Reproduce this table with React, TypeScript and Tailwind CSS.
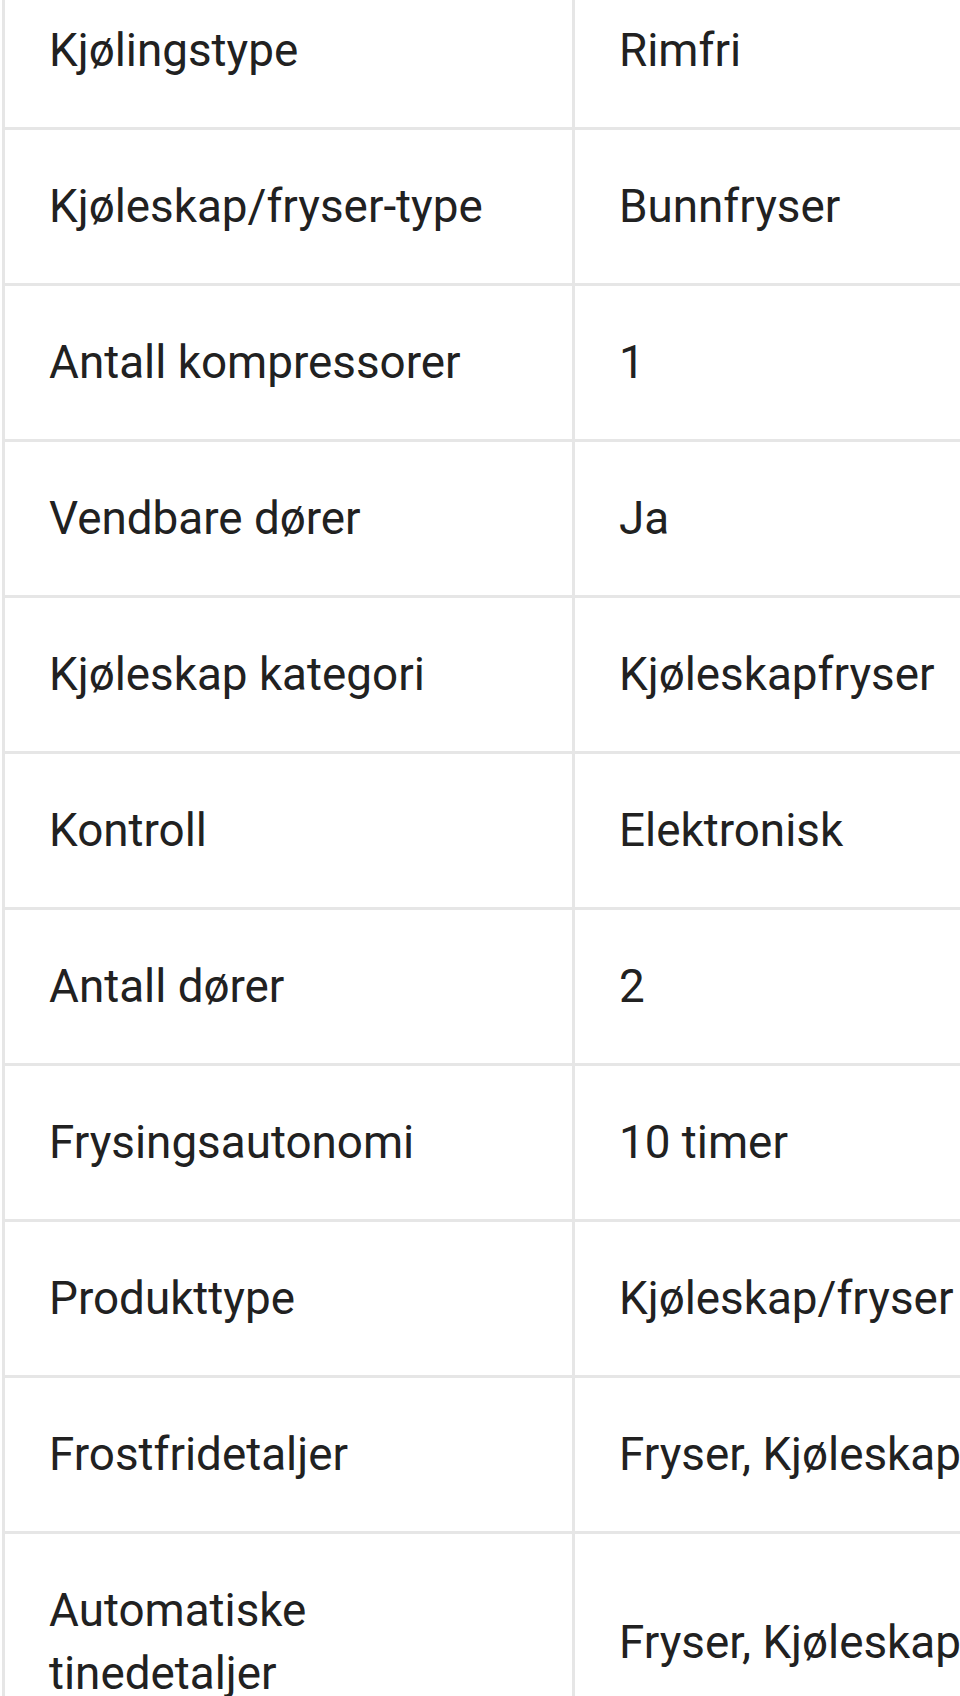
import React from 'react';

const rows: [string, string][] = [
    ['Kjølingstype', 'Rimfri'],
    ['Kjøleskap/fryser-type', 'Bunnfryser'],
    ['Antall kompressorer', '1'],
    ['Vendbare dører', 'Ja'],
    ['Kjøleskap kategori', 'Kjøleskapfryser'],
    ['Kontroll', 'Elektronisk'],
    ['Antall dører', '2'],
    ['Frysingsautonomi', '10 timer'],
    ['Produkttype', 'Kjøleskap/fryser'],
    ['Frostfridetaljer', 'Fryser, Kjøleskap'],
    ['Automatiske tinedetaljer', 'Fryser, Kjøleskap'],
];

const App: React.FC = () => {
    return (
        <div className="w-[960px] h-[1696px] overflow-hidden bg-white font-['Roboto',sans-serif] text-[#212121]">
            <div className="-mt-[26px] ml-[2px] w-[1146px] border-l-[3px] border-[#e6e6e6]">
                {rows.map(([label, value]) => (
                    <div key={label} className="flex border-b-[3px] border-[#e6e6e6]">
                        <div className="w-[570px] flex items-center border-r-[3px] border-[#e6e6e6] py-[45px] pl-[44px] pr-[50px] text-[45.8px] leading-[63px]">
                            {label}
                        </div>
                        <div className="w-[570px] flex items-center pl-[44px] text-[45.8px] leading-[63px] whitespace-nowrap">
                            {value}
                        </div>
                    </div>
                ))}
            </div>
        </div>
    );
};

export default App;
